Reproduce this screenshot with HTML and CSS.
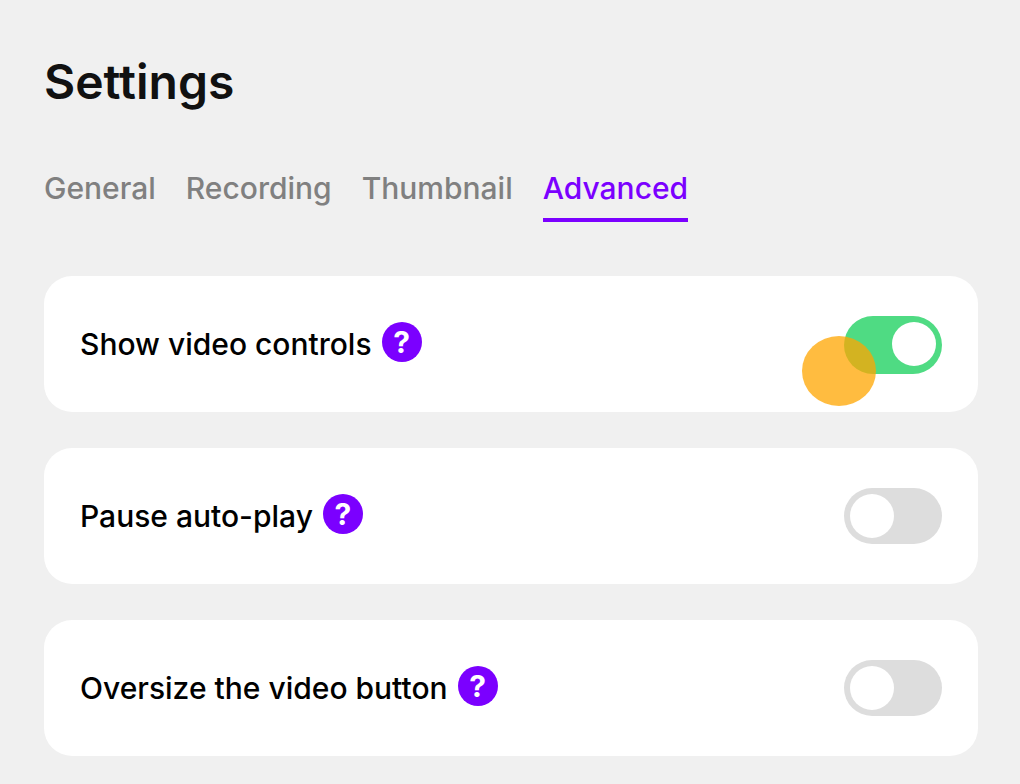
FILE: index.html
```html
<!DOCTYPE html>
<html lang="en">
<head>
<meta charset="utf-8">
<meta name="viewport" content="width=device-width, initial-scale=1">
<title>Settings</title>
<link rel="stylesheet" href="styles.css">
</head>
<body>
<main class="settings">
  <h1 class="title">Settings</h1>
  <nav class="tabs" aria-label="Settings sections">
    <a class="tab" href="#general">General</a>
    <a class="tab" href="#recording">Recording</a>
    <a class="tab" href="#thumbnail">Thumbnail</a>
    <a class="tab tab-active" href="#advanced" aria-current="page">Advanced</a>
  </nav>
  <section class="cards">
    <div class="card">
      <label class="label" for="controls">Show video controls</label>
      <button class="help" type="button">?</button>
      <span class="control">
        <input class="toggle" id="controls" type="checkbox" role="switch" checked>
        <span class="pointer"></span>
      </span>
    </div>
    <div class="card">
      <label class="label" for="autoplay">Pause auto-play</label>
      <button class="help" type="button">?</button>
      <span class="control">
        <input class="toggle" id="autoplay" type="checkbox" role="switch">
      </span>
    </div>
    <div class="card">
      <label class="label" for="oversize">Oversize the video button</label>
      <button class="help" type="button">?</button>
      <span class="control">
        <input class="toggle" id="oversize" type="checkbox" role="switch">
      </span>
    </div>
  </section>
</main>
</body>
</html>
```
FILE: styles.css
```css
* {
  box-sizing: border-box;
}

body {
  margin: 0;
  background: #f0f0f0;
  color: #000;
  font-family: Inter, "Liberation Sans", sans-serif;
}

.settings {
  padding: 52px 42px 28px 44px;
}

.title {
  margin: 0;
  color: #111;
  font-size: 48px;
  font-weight: 600;
  line-height: 60px;
}

.tabs {
  display: flex;
  gap: 30px;
  margin-top: 56px;
}

.tab {
  padding-bottom: 10px;
  border-bottom: 4px solid transparent;
  color: #808080;
  font-size: 30px;
  font-weight: 500;
  line-height: 40px;
  text-decoration: none;
}

.tab-active {
  border-bottom-color: #7b00ff;
  color: #7b00ff;
}

.cards {
  display: grid;
  gap: 36px;
  margin-top: 54px;
}

.card {
  display: flex;
  align-items: center;
  min-height: 136px;
  padding: 36px;
  border-radius: 28px;
  background: #fff;
}

.label {
  font-size: 30px;
  font-weight: 500;
  line-height: 40px;
}

.help {
  width: 40px;
  height: 40px;
  margin: 0 0 4px 10px;
  padding: 0;
  border: 0;
  border-radius: 50%;
  background: #7b00ff;
  color: #fff;
  font: 700 30px/40px Inter, "Liberation Sans", sans-serif;
}

.control {
  position: relative;
  display: flex;
  margin-left: auto;
}

.toggle {
  display: flex;
  appearance: none;
  width: 98px;
  height: 56px;
  margin: 0;
  padding: 6px;
  border-radius: 29px;
  background: #ddd;
}

.toggle::before {
  content: "";
  width: 44px;
  height: 44px;
  border-radius: 50%;
  background: #fff;
}

.toggle:checked {
  justify-content: flex-end;
  height: 58px;
  margin-bottom: -2px;
  background: #4fdb83;
}

.pointer {
  position: absolute;
  top: 20px;
  left: -42px;
  width: 74px;
  height: 70px;
  border-radius: 50%;
  background: rgba(255, 165, 0, 0.75);
  pointer-events: none;
}
```
